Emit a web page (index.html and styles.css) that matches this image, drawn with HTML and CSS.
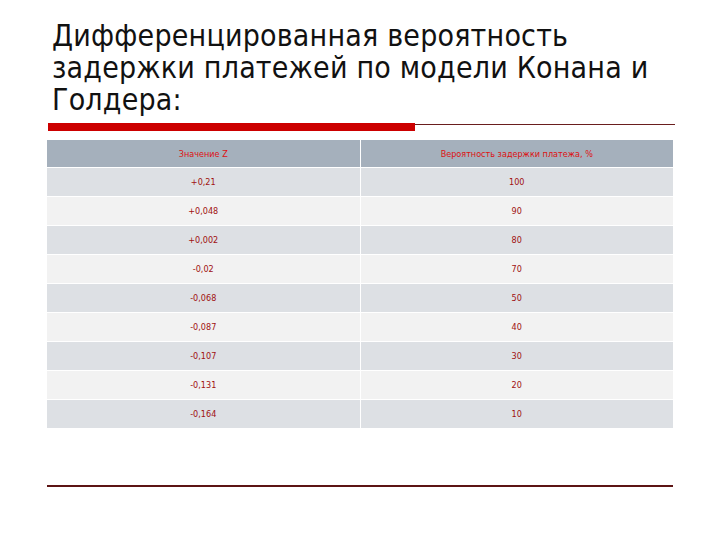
FILE: index.html
```html
<!DOCTYPE html>
<html lang="ru">
<head>
<meta charset="utf-8">
<link rel="stylesheet" href="styles.css">
</head>
<body>
<div class="slide">
  <h1 class="title">Дифференцированная вероятность задержки платежей по модели Конана и Голдера:</h1>
  <div class="rule">
    <div class="rule-red"></div>
    <div class="rule-thin"></div>
  </div>
  <table class="data">
    <thead>
      <tr><th>Значение Z</th><th>Вероятность задержки платежа, %</th></tr>
    </thead>
    <tbody>
      <tr><td>+0,21</td><td>100</td></tr>
      <tr><td>+0,048</td><td>90</td></tr>
      <tr><td>+0,002</td><td>80</td></tr>
      <tr><td>-0,02</td><td>70</td></tr>
      <tr><td>-0,068</td><td>50</td></tr>
      <tr><td>-0,087</td><td>40</td></tr>
      <tr><td>-0,107</td><td>30</td></tr>
      <tr><td>-0,131</td><td>20</td></tr>
      <tr><td>-0,164</td><td>10</td></tr>
    </tbody>
  </table>
  <div class="bottom-rule"></div>
</div>
</body>
</html>
```
FILE: styles.css
```css
html, body {
  margin: 0;
  padding: 0;
  background: #ffffff;
}
.slide {
  width: 720px;
  height: 540px;
  box-sizing: border-box;
  padding: 20px 46px 0 46px;
}
.title {
  margin: 0 0 0 6px;
  font-family: "DejaVu Sans Condensed", "DejaVu Sans", sans-serif;
  font-weight: normal;
  font-size: 30px;
  letter-spacing: 0.2px;
  line-height: 32px;
  color: #111111;
  width: 610px;
}
.rule {
  display: flex;
  align-items: flex-start;
  margin: 7px 0 0 2px;
  width: 627px;
}
.rule-red {
  width: 367px;
  height: 8px;
  background: #cc0000;
}
.rule-thin {
  flex: 1;
  height: 1px;
  margin-top: 1px;
  background: #6a1e1e;
}
.data {
  margin-top: 8px;
  width: 628px;
  border-collapse: collapse;
  font-family: "DejaVu Sans Condensed", "DejaVu Sans", sans-serif;
  font-size: 9px;
}
.data th, .data td {
  text-align: center;
  border: 1px solid #ffffff;
  padding: 0;
}
.data th {
  height: 27px;
  background: #a5b0bc;
  color: #dd1111;
  font-weight: normal;
  width: 50%;
}
.data th:first-child { width: 312px; }
.data td {
  height: 28px;
  color: #a01010;
}
.data tbody tr:nth-child(odd) td { background: #dde0e4; }
.data tbody tr:nth-child(even) td { background: #f2f2f2; }
.bottom-rule {
  margin: 56px 0 0 1px;
  width: 626px;
  height: 2px;
  background: #5c1414;
}
```
